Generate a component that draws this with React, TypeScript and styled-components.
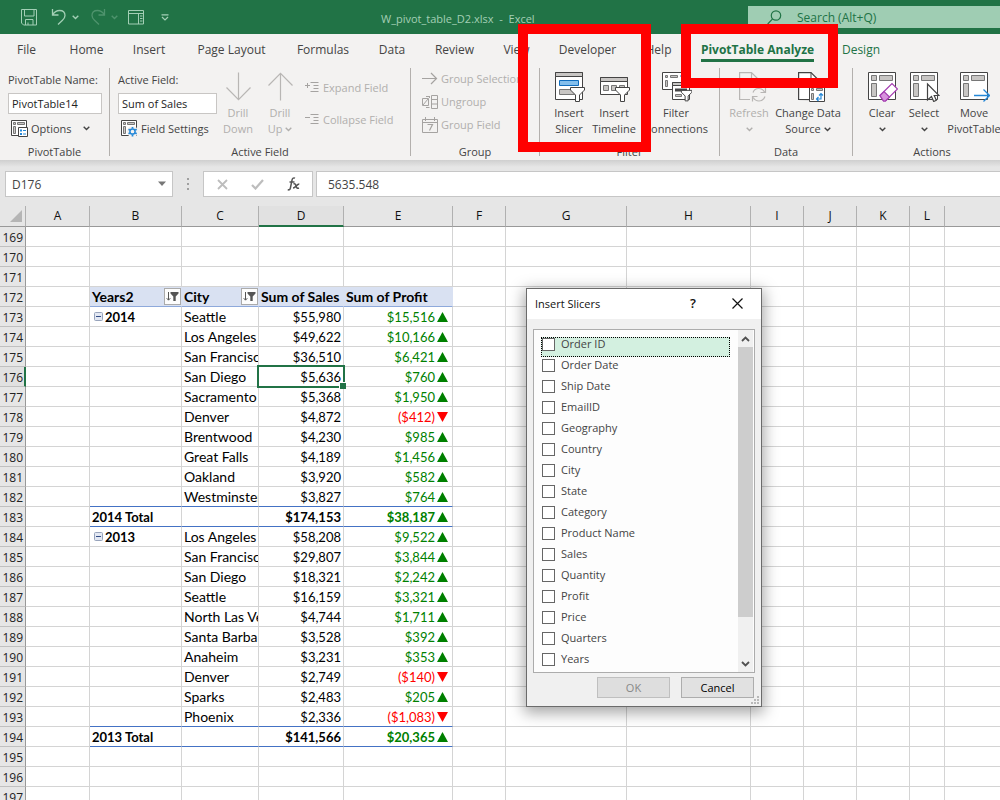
import React from 'react';
import styled, { createGlobalStyle, css } from 'styled-components';

const ui = `"Open Sans", "Noto Sans", sans-serif`;
const sheet = `Lato, "Liberation Sans", sans-serif`;

const Global = createGlobalStyle`
  * { box-sizing: border-box; }
  body { margin: 0; background: #fff; font-family: ${ui}; font-size: 12px; color: #444; }
  button, input { font: inherit; color: inherit; margin: 0; }
  button { border: 0; padding: 0; background: none; }
  svg { display: block; flex: none; }
`;

const Window = styled.div`
  position: relative;
  display: flex;
  flex-direction: column;
  height: 100vh;
  overflow: hidden;
`;

/* ---------- title bar ---------- */
const TitleBar = styled.header`
  display: flex;
  flex: none;
  align-items: center;
  height: 34px;
  background: #217346;
  color: #a3cfb5;
  overflow: hidden;
`;
const QuickAccess = styled.div`
  display: flex;
  flex: none;
  align-items: center;
  width: 381px;
  padding-left: 21px;
`;
const QuickButton = styled.button<{ $gap: number; $dim?: boolean }>`
  margin-right: ${(p) => p.$gap}px;
  opacity: ${(p) => (p.$dim ? 0.35 : 1)};
`;
const FileName = styled.div`
  flex: 1;
  padding-top: 2px;
  white-space: pre;
  font-size: 11px;
`;
const SearchBox = styled.label`
  display: flex;
  flex: none;
  align-items: center;
  gap: 15px;
  width: 252px;
  height: 22px;
  padding-left: 19px;
  background: #9fcdb3;
  color: #217346;
`;
const SearchInput = styled.input`
  width: 180px;
  padding: 0;
  border: 0;
  outline: 0;
  background: none;
  font-size: 12px;
  &::placeholder { color: #217346; opacity: 1; }
`;

/* ---------- tabs ---------- */
const Tabs = styled.nav`
  display: flex;
  flex: none;
  height: 30px;
  background: #f3f2f1;
  overflow: hidden;
`;
const Tab = styled.button<{ $w: number; $tone?: 'active' | 'green' }>`
  flex: none;
  display: flex;
  justify-content: center;
  width: ${(p) => p.$w}px;
  padding-top: 6px;
  font-size: 12px;
  line-height: 19px;
  white-space: nowrap;
  color: ${(p) => (p.$tone ? '#217346' : '#444')};
  ${(p) => p.$tone === 'active' && css`
    font-weight: 700;
    span { border-bottom: 3px solid #217346; height: 22px; }
  `}
`;

/* ---------- ribbon ---------- */
const Ribbon = styled.section`
  display: flex;
  flex: none;
  height: 96px;
  background: #f3f2f1;
  overflow: hidden;
`;
const Group = styled.div<{ $w?: number }>`
  display: flex;
  flex-direction: column;
  flex: ${(p) => (p.$w ? 'none' : '1 0 158px')};
  width: ${(p) => (p.$w ? `${p.$w}px` : 'auto')};
  margin: 4px 0;
  ${(p) => p.$w && 'border-right: 1px solid #b3b0ad;'}
`;
const GroupBody = styled.div<{ $pad: number }>`
  display: flex;
  flex: none;
  height: 76px;
  padding-left: ${(p) => p.$pad}px;
`;
const Caption = styled.div<{ $w?: number }>`
  flex: none;
  width: ${(p) => (p.$w ? `${p.$w}px` : '100%')};
  text-align: center;
  font-size: 11px;
  line-height: 16px;
`;
const Stack = styled.div<{ $w: number }>`
  display: flex;
  flex: none;
  flex-direction: column;
  width: ${(p) => p.$w}px;
`;
const FieldLabel = styled.label`
  flex: none;
  height: 25px;
  padding-top: 4px;
  font-size: 11px;
  line-height: 16px;
  white-space: nowrap;
`;
const FieldInput = styled.input`
  flex: none;
  height: 21px;
  width: 100%;
  padding: 0 3px;
  border: 1px solid #c8c6c4;
  background: #fff;
  color: #222;
  font-size: 11px;
`;
const SmallButton = styled.button<{ $off?: boolean; $h?: number; $lift?: number; $pad?: number }>`
  display: flex;
  flex: none;
  align-items: center;
  gap: 3px;
  height: ${(p) => p.$h ?? 23}px;
  padding: 0 0 ${(p) => p.$lift ?? 0}px ${(p) => p.$pad ?? 0}px;
  font-size: 11px;
  white-space: nowrap;
  color: ${(p) => (p.$off ? '#b1afad' : '#444')};
`;
const MenuLabel = styled.span`
  margin-right: 8px;
`;
const BigButton = styled.button<{ $w: number; $off?: boolean }>`
  display: flex;
  flex: none;
  flex-direction: column;
  align-items: center;
  width: ${(p) => p.$w}px;
  padding-top: 4px;
  font-size: 11px;
  line-height: 16px;
  white-space: nowrap;
  color: ${(p) => (p.$off ? '#b1afad' : '#444')};
`;
const Line = styled.span`
  display: flex;
  align-items: center;
  gap: 3px;
  height: 16px;
`;
const IconSlot = styled.span`
  display: flex;
  justify-content: center;
  height: 33px;
  padding-left: 2px;
`;
const Rows = styled.div<{ $top: number; $pad: number }>`
  display: flex;
  flex-direction: column;
  padding: ${(p) => p.$top}px 0 0 ${(p) => p.$pad}px;
`;

/* ---------- formula bar ---------- */
const FormulaRow = styled.section`
  display: flex;
  flex: none;
  height: 46px;
  padding: 11px 0 9px 5px;
  background: linear-gradient(#cfcfcf, #e6e6e6 7px);
`;
const WhiteBox = styled.div<{ $w: number }>`
  display: flex;
  align-items: center;
  flex: none;
  width: ${(p) => p.$w}px;
  background: #fff;
  border: 1px solid #c6c6c6;
`;
const NameInput = styled.input`
  flex: 1;
  min-width: 0;
  padding: 0 6px;
  border: 0;
  background: none;
  font-size: 12px;
`;
const Grip = styled.div`
  display: flex;
  align-items: center;
  justify-content: center;
  width: 30px;
`;
const FormulaTools = styled(WhiteBox)`
  justify-content: space-around;
  padding: 0 1px 0 2px;
`;
const FormulaInput = styled.input`
  flex: 1;
  min-width: 0;
  margin-left: 3px;
  padding: 0 11px;
  border: 1px solid #c6c6c6;
  border-right: 0;
  background: #fff;
  font-size: 12px;
`;

/* ---------- sheet ---------- */
const SheetArea = styled.main`
  flex: 1;
  min-height: 0;
  overflow: hidden;
  background: #fff;
`;
const Table = styled.table`
  width: 100%;
  min-width: 1066px;
  table-layout: fixed;
  border-collapse: separate;
  border-spacing: 0;
  font-family: ${sheet};
  font-size: 13px;
  color: #000;
`;
const ColHead = styled.th<{ $sel?: boolean }>`
  height: 21px;
  padding: ${(p) => (p.$sel ? '1px 0 0' : '1px 0')};
  background: ${(p) => (p.$sel ? '#e1e1e1' : '#e6e6e6')};
  border-right: 1px solid #b0b0b0;
  border-bottom: ${(p) => (p.$sel ? '2px solid #217346' : '1px solid #999')};
  font: 12px/18px ${ui};
  color: #111;
`;
const Corner = styled(ColHead)`
  svg { margin-left: auto; margin-right: 3px; }
`;
const RowHead = styled.th<{ $sel?: boolean }>`
  height: 20px;
  padding: 2px ${(p) => (p.$sel ? 1 : 2)}px 0 0;
  text-align: right;
  background: ${(p) => (p.$sel ? '#e1e1e1' : '#e6e6e6')};
  border-right: ${(p) => (p.$sel ? '2px solid #217346' : '1px solid #999')};
  border-bottom: 1px solid #c0c0c0;
  font: 12px/17px ${ui};
  color: #222;
`;
type CellProps = { $bold?: boolean; $right?: boolean; $line?: string; $head?: boolean; $label?: boolean; $tone?: string; $sel?: boolean };
const Cell = styled.td<CellProps>`
  position: relative;
  height: 20px;
  padding: ${(p) => (p.$label ? 1 : 2)}px 2px 0;
  vertical-align: top;
  font-size: ${(p) => (p.$label ? 14 : 13)}px;
  line-height: 17px;
  white-space: nowrap;
  overflow: ${(p) => (p.$sel ? 'visible' : 'hidden')};
  border-right: 1px solid ${(p) => (p.$head ? '#d9e1f2' : '#d4d4d4')};
  border-bottom: 1px solid ${(p) => p.$line ?? '#d4d4d4'};
  background: ${(p) => (p.$head ? '#d9e1f2' : '#fff')};
  font-weight: ${(p) => (p.$bold ? 700 : 400)};
  text-align: ${(p) => (p.$right ? 'right' : 'left')};
  color: ${(p) => p.$tone ?? '#000'};
`;
const Inline = styled.div<{ $end?: boolean; $between?: boolean }>`
  display: flex;
  align-items: center;
  gap: 2px;
  height: 17px;
  justify-content: ${(p) => (p.$end ? 'flex-end' : p.$between ? 'space-between' : 'flex-start')};
`;
const ProfitInline = styled(Inline)`
  padding-right: 2px;
`;
const FilterButton = styled.button`
  display: flex;
  align-items: center;
  justify-content: center;
  width: 17px;
  height: 17px;
  margin-right: -2px;
  border: 1px solid #ababab;
  background: #fdfdfd;
`;
const Collapse = styled.button`
  margin: 0 0 2px 2px;
`;
const SelectionFrame = styled.span`
  position: absolute;
  z-index: 1;
  inset: -2px;
  border: 2px solid #217346;
  pointer-events: none;
  &::after {
    content: '';
    position: absolute;
    right: -3px;
    bottom: -3px;
    width: 6px;
    height: 6px;
    background: #217346;
    border: solid #fff;
    border-width: 1px 0 0 1px;
  }
`;

/* ---------- dialog ---------- */
const Dialog = styled.section`
  position: absolute;
  z-index: 5;
  left: 526px;
  top: 288px;
  width: 236px;
  border: 1px solid #6b6b6b;
  background: #f0f0f0;
  box-shadow: 0 4px 14px 2px rgba(0, 0, 0, 0.35);
  font-size: 11px;
`;
const DialogTitle = styled.div`
  display: flex;
  align-items: center;
  height: 30px;
  padding: 0 18px 2px 8px;
  background: #fff;
  color: #111;
`;
const DialogName = styled.h2`
  flex: 1;
  margin: 0;
  font-size: 11px;
  font-weight: 400;
`;
const HelpButton = styled.button`
  margin-right: 36px;
  font-size: 13px;
  font-weight: 600;
`;
const ListBox = styled.div`
  display: flex;
  margin: 10px 6px 0;
  height: 344px;
  border: 1px solid #acacac;
  background: #fdfdfd;
`;
const Items = styled.div`
  flex: 1;
  padding: 7px 0 0 7px;
`;
const Item = styled.label<{ $on?: boolean }>`
  display: flex;
  align-items: flex-start;
  gap: 6px;
  width: 189px;
  height: 20px;
  margin-bottom: 1px;
  padding: 0 0 0 1px;
  line-height: 14px;
  background: ${(p) => (p.$on ? '#d3f0e0' : 'none')};
  outline: ${(p) => (p.$on ? '1px dotted #000' : '0')};
  outline-offset: -1px;
`;
const Tick = styled.input`
  appearance: none;
  width: 13px;
  height: 13px;
  margin: 1px 0 0;
  border: 1px solid #666;
  background: #fff;
`;
const Scroll = styled.div`
  display: flex;
  flex-direction: column;
  width: 15px;
  margin-right: 1px;
  background: #f0f0f0;
`;
const ScrollButton = styled.button`
  display: flex;
  align-items: center;
  justify-content: center;
  height: 17px;
`;
const Thumb = styled.div`
  height: 270px;
  margin-bottom: auto;
  background: #cdcdcd;
`;
const Actions = styled.div`
  display: flex;
  justify-content: flex-end;
  gap: 11px;
  padding: 4px 7px 8px;
`;
const PushButton = styled.button<{ $off?: boolean }>`
  width: 73px;
  height: 21px;
  border: 1px solid ${(p) => (p.$off ? '#bfbfbf' : '#adadad')};
  background: ${(p) => (p.$off ? '#dedede' : '#e1e1e1')};
  color: ${(p) => (p.$off ? '#888' : '#000')};
`;
const ResizeGrip = styled.svg`
  position: absolute;
  right: 2px;
  bottom: 2px;
`;

const Highlight = styled.div<{ $x: number; $w: number; $h: number }>`
  position: absolute;
  z-index: 6;
  left: ${(p) => p.$x}px;
  top: 24px;
  width: ${(p) => p.$w}px;
  height: ${(p) => p.$h}px;
  border: 10px solid #f00;
  pointer-events: none;
`;

/* ---------- icons ---------- */
const Chevron = ({ c = '#444', s = 7 }: { c?: string; s?: number }) => (
  <svg width={s} height="5" viewBox="0 0 7 5" fill="none" stroke={c} strokeWidth="1.4"><path d="M.7 .8 3.5 3.6 6.3 .8" /></svg>
);
const SaveIcon = () => (
  <svg width="17" height="17" viewBox="0 0 17 17" fill="none" stroke="currentColor">
    <path d="M.5 .5h15v15.500H2.500L.5 14z M3.500 .5v6.500h9.500V.5 M4.500 16v-5.500h7.500V16 M7 16v-2.500" />
  </svg>
);
const UndoIcon = ({ flip }: { flip?: boolean }) => (
  <svg width="16" height="18" viewBox="0 0 16 18" fill="none" stroke="currentColor" strokeWidth="1.300">
    <path transform={flip ? 'matrix(-1 0 0 1 16 0)' : undefined} d="M1.500 1v6h6 M1.500 7C3 4.500 5.500 2.500 8.500 2.500c3.500 0 5.500 2.200 5.500 5 0 2-1 3.300-2.500 4.700L7 16.500" />
  </svg>
);
const PaneIcon = () => (
  <svg width="16" height="15" viewBox="0 0 16 15" fill="none" stroke="currentColor">
    <path d="M.5 .5h15v13.500H.5z M.5 3.500h15 M10.500 3.500V14 M12 6h2.500 M12 8.500h2.500 M12 11h2.500" />
  </svg>
);
const MoreIcon = () => (
  <svg width="8" height="7" viewBox="0 0 8 7" fill="none" stroke="currentColor" strokeWidth="1.200"><path d="M.5 .8h7 M1 3l3 3 3-3" /></svg>
);
const SearchIcon = () => (
  <svg width="15" height="15" viewBox="0 0 15 15" fill="none" stroke="#217346" strokeWidth="1.200"><circle cx="9" cy="5.500" r="4.700" /><path d="M5.600 8.900.7 14" /></svg>
);
const pivotFrame = (
  <>
    <path d="M.5 .5h27v27H.5z" fill="#fff" stroke="#444" />
    <path d="M3.500 3.500h5v5h-5z M11.500 3.500h13v5h-13z M3.500 11.500h5v13h-5z" fill="#c8c6c4" stroke="#777" />
  </>
);
const PivotSmall = ({ gear }: { gear?: boolean }) => (
  <svg width="17" height="17" viewBox="0 0 17 17" fill="none">
    <path d="M.5 .5h15v15H.5z" fill="#fff" stroke="#444" />
    <path d="M2.500 2.500h2v2h-2z M6.500 2.500h7v2h-7z M2.500 6.500h2v7h-2z" fill="#c8c6c4" stroke="#777" />
    {gear ? (
      <>
        <circle cx="11.500" cy="11.500" r="5.500" fill="#f3f2f1" />
        <circle cx="11.500" cy="11.500" r="2.600" stroke="#2488d8" strokeWidth="1.500" />
        <path d="M11.500 7v1.500 M11.500 14.500V16.500 M7.500 9.300l1.400 .8 M14.200 13l1.500 .8 M7.500 13.700l1.400-.8 M14.200 10l1.500-.8" stroke="#2488d8" strokeWidth="1.700" />
      </>
    ) : (
      <>
        <path d="M7.500 7.500h9v9h-9z" fill="#fff" stroke="#444" />
        <path d="M9 9.500h2v2H9z M9 13h2v2H9z" fill="#2488d8" />
        <path d="M12 10.500h3 M12 14h3" stroke="#2488d8" />
      </>
    )}
  </svg>
);
const Arrow = ({ up }: { up?: boolean }) => (
  <svg width="26" height="29" viewBox="1 0 26 29" fill="none" stroke="#b8b6b4" strokeWidth="1.200">
    <path transform={up ? 'matrix(1 0 0 -1 0 29)' : undefined} d="M13.500 .5v27 M1.500 15.500 13.500 27.700 25.500 15.500" />
  </svg>
);
const OutlineIcon = ({ plus }: { plus?: boolean }) => (
  <svg width="15" height="12" viewBox="0 0 15 12" fill="none" stroke="#a5a3a1">
    <path d="M5.500 1.500h8 M8.500 4.500h5 M8.500 7.500h5 M5.500 10.500h8 M0 4.500h5" />
    {plus && <path d="M2.500 2v5" />}
  </svg>
);
const GroupArrow = () => (
  <svg width="16" height="13" viewBox="0 0 16 13" fill="none" stroke="#a5a3a1" strokeWidth="1.200"><path d="M0 6.500h14.500 M9 1l5.500 5.500L9 12" /></svg>
);
const UngroupIcon = () => (
  <svg width="16" height="14" viewBox="0 0 16 14" fill="none" stroke="#a5a3a1">
    <path d="M.5 3.500h6v7h-6z M1 10l5-6 M9.500 .5h6v13h-6z M9.500 4.500h6 M9.500 9h6 M4 1.500h3.500 M7.500 1v2 M4 12.500h3.500" />
  </svg>
);
const CalendarIcon = () => (
  <svg width="16" height="16" viewBox="0 0 16 16" fill="none" stroke="#a5a3a1">
    <path d="M.5 2.500h15v13H.5z M.5 5.500h15 M3.500 0v4 M12.500 0v4" /><path d="M5.500 7.500h5L7.500 13.500" strokeWidth="1.200" />
  </svg>
);
const funnel = 'M.5 .5h14v2.500L9.500 8v6.500h-4V8L.5 3z';
const SlicerIcon = () => (
  <svg width="30" height="30" viewBox="0 0 30 30">
    <path d="M.5 .5h27v27H.5z" fill="#fff" stroke="#444" />
    <path d="M.5 .5h27v4H.5z" fill="#c8c6c4" stroke="#444" />
    <path d="M4.500 8.500h19v5h-19z" fill="#83beec" stroke="#0f6cbd" />
    <path d="M4.500 17.500h15v5h-15z" fill="#c8c6c4" stroke="#777" />
    <path transform="translate(15 15)" d={funnel} fill="#fff" stroke="#444" />
  </svg>
);
const TimelineIcon = () => (
  <svg width="30" height="30" viewBox="0 0 30 30">
    <path d="M.5 5.500h27v17H.5z" fill="#fff" stroke="#444" />
    <path d="M.5 5.500h27v4H.5z" fill="#c8c6c4" stroke="#444" />
    <path d="M3.500 13.500h5v5h-5z M11.500 13.500h5v5h-5z M19.500 13.500h5v5h-5z" fill="#c8c6c4" stroke="#777" />
    <path transform="translate(15 15)" d={funnel} fill="#fff" stroke="#444" />
  </svg>
);
const ConnectionsIcon = () => (
  <svg width="30" height="30" viewBox="0 0 30 30">
    <path d="M.5 .5h20v17H.5z" fill="#fff" stroke="#444" />
    <path d="M3.500 3.500h2v2h-2z M8.500 3.500h7v2h-7z M3.500 8.500h2v6h-2z" fill="#c8c6c4" stroke="#777" />
    <path d="M18 4h7v6" fill="none" stroke="#2488d8" />
    <path d="M10.500 10.500h17v17h-17z" fill="#fff" stroke="#444" />
    <path d="M10.500 10.500h17v3h-17z" fill="#c8c6c4" stroke="#444" />
    <path d="M13 16.500h12v3H13z" fill="#444" />
    <path d="M13.500 22.500h6v2h-6z" fill="#c8c6c4" stroke="#777" />
    <path transform="translate(19 18) scale(.75)" d={funnel} fill="#fff" stroke="#444" strokeWidth="1.300" />
  </svg>
);
const RefreshIcon = () => (
  <svg width="34" height="30" viewBox="-6 0 34 30" fill="none" stroke="#b8b6b4" strokeWidth="1.200">
    <path d="M11 27.500H.6V.6H12.500l6 6V14 M12.500 .6v6h6" />
    <path d="M14 20.500c1-2.800 3.300-4 5.700-4 2.800 0 4.500 1.300 5.800 3.500 M26.500 15.500v5h-5 M26 24.500c-1 2.800-3.300 4.500-6 4.500-2.500 0-4.500-1.300-5.700-3.500 M13.500 29.500v-5h5" />
  </svg>
);
const ChangeSourceIcon = () => (
  <svg width="34" height="30" viewBox="-6 0 34 30" fill="none">
    <path d="M.6 27.500V.6H13l6 6v21z" fill="#fff" stroke="#444" strokeWidth="1.200" /><path d="M13 .6v6h6" stroke="#444" />
    <path d="M11.500 14.500h15v15h-15z" fill="#fff" stroke="#444" />
    <path d="M13.500 16.500h2v2h-2z M18.500 16.500h6v2h-6z M13.500 21.500h2v6h-2z" fill="#c8c6c4" stroke="#777" />
    <path d="M18.500 27h4.500v-5.500 M20.500 25l-2 2 2 2 M21 23.500l2-2 2 2" stroke="#2488d8" strokeWidth="1.200" />
  </svg>
);
const ClearIcon = () => (
  <svg width="30" height="30" viewBox="0 0 30 30">
    {pivotFrame}
    <path d="M12 23.500 24 11.500l5.500 5.500L17.500 29h-2z" fill="#fff" stroke="#a33bb0" strokeWidth="1.200" />
    <path d="M12 23.500 16 19.500l5.500 5.500-4 4h-2z" fill="#d792dd" stroke="#a33bb0" strokeWidth="1.200" />
  </svg>
);
const SelectIcon = () => (
  <svg width="30" height="30" viewBox="0 0 30 30">
    {pivotFrame}
    <path d="M17.500 12v16l4-3.500 2.200 5 2.600-1.200-2.100-4.800h4.800z" fill="#fff" stroke="#444" strokeWidth="1.200" />
  </svg>
);
const MoveIcon = () => (
  <svg width="30" height="30" viewBox="0 0 30 30">
    {pivotFrame}
    <path d="M14 23.500h15 M23.500 17.500l6 6-6 6" fill="none" stroke="#2488d8" strokeWidth="1.300" />
  </svg>
);
const SortFilterIcon = () => (
  <svg width="13" height="11" viewBox="0 0 13 11">
    <path d="M2.500 1v8 M.7 7.200l1.800 2 1.800-2" fill="none" stroke="#555" />
    <path d="M4.500 1h8v1.500L9.700 5.500V10H7.300V5.500L4.500 2.500z" fill="#555" />
  </svg>
);
const MinusBox = () => (
  <svg width="9" height="9" viewBox="0 0 9 9"><rect x=".5" y=".5" width="8" height="8" rx="1" fill="#e3e8f3" stroke="#97a3bb" /><path d="M2 4.500h5" stroke="#334c86" /></svg>
);
const Trend = ({ down }: { down?: boolean }) => (
  <svg width="11" height="11" viewBox="0 0 11 11"><path d={down ? 'M0 0h11L5.500 10z' : 'M0 10h11L5.500 0z'} fill={down ? '#f00' : '#008000'} /></svg>
);

/* ---------- data ---------- */
const tabs: [string, number, ('active' | 'green')?][] = [
  ['File', 53], ['Home', 67], ['Insert', 58], ['Page Layout', 107], ['Formulas', 76], ['Data', 62],
  ['Review', 63], ['View', 61], ['Developer', 81], ['Help', 61], ['PivotTable Analyze', 137, 'active'], ['Design', 70, 'green'],
];
const columns: [string, number?][] = [
  ['A', 64], ['B', 92], ['C', 77], ['D', 85], ['E', 109], ['F', 53], ['G', 121], ['H', 124],
  ['I', 53], ['J', 53], ['K', 53], ['L', 35], ['M'],
];
type Row = { year?: string; total?: string; city?: string; sales: string; profit: string };
const data: Record<number, Row> = {
  173: { year: '2014', city: 'Seattle', sales: '$55,980', profit: '$15,516' },
  174: { city: 'Los Angeles', sales: '$49,622', profit: '$10,166' },
  175: { city: 'San Francisco', sales: '$36,510', profit: '$6,421' },
  176: { city: 'San Diego', sales: '$5,636', profit: '$760' },
  177: { city: 'Sacramento', sales: '$5,368', profit: '$1,950' },
  178: { city: 'Denver', sales: '$4,872', profit: '($412)' },
  179: { city: 'Brentwood', sales: '$4,230', profit: '$985' },
  180: { city: 'Great Falls', sales: '$4,189', profit: '$1,456' },
  181: { city: 'Oakland', sales: '$3,920', profit: '$582' },
  182: { city: 'Westminster', sales: '$3,827', profit: '$764' },
  183: { total: '2014 Total', sales: '$174,153', profit: '$38,187' },
  184: { year: '2013', city: 'Los Angeles', sales: '$58,208', profit: '$9,522' },
  185: { city: 'San Francisco', sales: '$29,807', profit: '$3,844' },
  186: { city: 'San Diego', sales: '$18,321', profit: '$2,242' },
  187: { city: 'Seattle', sales: '$16,159', profit: '$3,321' },
  188: { city: 'North Las Vegas', sales: '$4,744', profit: '$1,711' },
  189: { city: 'Santa Barbara', sales: '$3,528', profit: '$392' },
  190: { city: 'Anaheim', sales: '$3,231', profit: '$353' },
  191: { city: 'Denver', sales: '$2,749', profit: '($140)' },
  192: { city: 'Sparks', sales: '$2,483', profit: '$205' },
  193: { city: 'Phoenix', sales: '$2,336', profit: '($1,083)' },
  194: { total: '2013 Total', sales: '$141,566', profit: '$20,365' },
};
const slicers = ['Order ID', 'Order Date', 'Ship Date', 'EmailID', 'Geography', 'Country', 'City', 'State', 'Category',
  'Product Name', 'Sales', 'Quantity', 'Profit', 'Price', 'Quarters', 'Years'];
const rowNumbers = Array.from({ length: 29 }, (_, i) => 169 + i);
const blueLine = (n: number) => ([182, 183, 193, 194].includes(n) ? '#4472c4' : undefined);

const PivotCells = ({ n }: { n: number }) => {
  if (n === 172) {
    const head = { $head: true, $bold: true, $label: true, $line: '#8ea9db' };
    return (
      <>
        <Cell {...head}><Inline $between>Years2<FilterButton aria-label="Filter years"><SortFilterIcon /></FilterButton></Inline></Cell>
        <Cell {...head}><Inline $between>City<FilterButton aria-label="Filter cities"><SortFilterIcon /></FilterButton></Inline></Cell>
        <Cell {...head}>Sum of Sales</Cell>
        <Cell {...head}>Sum of Profit</Cell>
      </>
    );
  }
  const r = data[n];
  if (!r) return <><Cell /><Cell /><Cell /><Cell /></>;
  const down = r.profit.startsWith('(');
  const line = blueLine(n);
  const bold = !!r.total;
  return (
    <>
      <Cell $bold $line={line}>
        {r.year ? <Inline><Collapse aria-label={`Collapse ${r.year}`}><MinusBox /></Collapse>{r.year}</Inline> : r.total}
      </Cell>
      <Cell $label $line={line}>{r.city}</Cell>
      <Cell $right $bold={bold} $line={line} $sel={n === 176}>{r.sales}{n === 176 && <SelectionFrame />}</Cell>
      <Cell $bold={bold} $line={line} $tone={down ? '#f00' : '#008000'}>
        <ProfitInline $end>{r.profit}<Trend down={down} /></ProfitInline>
      </Cell>
    </>
  );
};

export default function App() {
  return (
    <Window>
      <Global />
      <TitleBar>
        <QuickAccess>
          <QuickButton $gap={13} aria-label="Save"><SaveIcon /></QuickButton>
          <QuickButton $gap={5} aria-label="Undo"><UndoIcon /></QuickButton>
          <QuickButton $gap={11} aria-label="Undo history"><Chevron c="currentColor" /></QuickButton>
          <QuickButton $gap={5} $dim aria-label="Redo"><UndoIcon flip /></QuickButton>
          <QuickButton $gap={10} $dim aria-label="Redo history"><Chevron c="currentColor" /></QuickButton>
          <QuickButton $gap={17} aria-label="Task pane"><PaneIcon /></QuickButton>
          <QuickButton $gap={0} aria-label="Customize toolbar"><MoreIcon /></QuickButton>
        </QuickAccess>
        <FileName>{'W_pivot_table_D2.xlsx  -  Excel'}</FileName>
        <SearchBox><SearchIcon /><SearchInput aria-label="Search" placeholder="Search (Alt+Q)" /></SearchBox>
      </TitleBar>

      <Tabs>
        {tabs.map(([name, w, tone]) => <Tab key={name} $w={w} $tone={tone}><span>{name}</span></Tab>)}
      </Tabs>

      <Ribbon>
        <Group $w={110}>
          <GroupBody $pad={8}>
            <Stack $w={94}>
              <FieldLabel htmlFor="pt-name">PivotTable Name:</FieldLabel>
              <FieldInput id="pt-name" defaultValue="PivotTable14" />
              <SmallButton $h={28} $pad={3}><PivotSmall /><MenuLabel>Options</MenuLabel><Chevron /></SmallButton>
            </Stack>
          </GroupBody>
          <Caption>PivotTable</Caption>
        </Group>
        <Group $w={301}>
          <GroupBody $pad={8}>
            <Stack $w={99}>
              <FieldLabel htmlFor="active-field">Active Field:</FieldLabel>
              <FieldInput id="active-field" defaultValue="Sum of Sales" />
              <SmallButton $h={28} $pad={3}><PivotSmall gear />Field Settings</SmallButton>
            </Stack>
            <BigButton $w={42} $off><IconSlot><Arrow /></IconSlot><Line>Drill</Line><Line>Down</Line></BigButton>
            <BigButton $w={42} $off><IconSlot><Arrow up /></IconSlot><Line>Drill</Line><Line>Up<Chevron c="#b1afad" /></Line></BigButton>
            <Rows $top={3} $pad={4}>
              <SmallButton $off $h={32}><OutlineIcon plus />Expand Field</SmallButton>
              <SmallButton $off $h={32}><OutlineIcon />Collapse Field</SmallButton>
            </Rows>
          </GroupBody>
          <Caption>Active Field</Caption>
        </Group>
        <Group $w={129}>
          <GroupBody $pad={10}>
            <Rows $top={0} $pad={1}>
              <SmallButton $off $lift={2}><GroupArrow />Group Selection</SmallButton>
              <SmallButton $off $lift={2}><UngroupIcon />Ungroup</SmallButton>
              <SmallButton $off $lift={2}><CalendarIcon />Group Field</SmallButton>
            </Rows>
          </GroupBody>
          <Caption>Group</Caption>
        </Group>
        <Group $w={180}>
          <GroupBody $pad={9}>
            <BigButton $w={40}><IconSlot><SlicerIcon /></IconSlot><Line>Insert</Line><Line>Slicer</Line></BigButton>
            <BigButton $w={50}><IconSlot><TimelineIcon /></IconSlot><Line>Insert</Line><Line>Timeline</Line></BigButton>
            <BigButton $w={74}><IconSlot><ConnectionsIcon /></IconSlot><Line>Filter</Line><Line>Connections</Line></BigButton>
          </GroupBody>
          <Caption>Filter</Caption>
        </Group>
        <Group $w={133}>
          <GroupBody $pad={8}>
            <BigButton $w={42} $off><IconSlot><RefreshIcon /></IconSlot><Line>Refresh</Line><Line><Chevron c="#b1afad" /></Line></BigButton>
            <BigButton $w={76}><IconSlot><ChangeSourceIcon /></IconSlot><Line>Change Data</Line><Line>Source<Chevron /></Line></BigButton>
          </GroupBody>
          <Caption>Data</Caption>
        </Group>
        <Group>
          <GroupBody $pad={8}>
            <BigButton $w={42}><IconSlot><ClearIcon /></IconSlot><Line>Clear</Line><Line><Chevron /></Line></BigButton>
            <BigButton $w={42}><IconSlot><SelectIcon /></IconSlot><Line>Select</Line><Line><Chevron /></Line></BigButton>
            <BigButton $w={58}><IconSlot><MoveIcon /></IconSlot><Line>Move</Line><Line>PivotTable</Line></BigButton>
          </GroupBody>
          <Caption $w={158}>Actions</Caption>
        </Group>
      </Ribbon>

      <FormulaRow>
        <WhiteBox $w={168}>
          <NameInput aria-label="Name box" defaultValue="D176" />
          <svg width="18" height="6" viewBox="0 0 18 6"><path d="M4 0.500h8L8 5z" fill="#777" /></svg>
        </WhiteBox>
        <Grip><svg width="2" height="12" viewBox="0 0 2 12"><path d="M0 0h2v2H0z M0 5h2v2H0z M0 10h2v2H0z" fill="#a0a0a0" /></svg></Grip>
        <FormulaTools $w={110}>
          <button aria-label="Cancel entry"><svg width="11" height="11" viewBox="0 0 11 11" stroke="#bdbdbd" strokeWidth="1.800"><path d="M1 1l9 9 M10 1l-9 9" /></svg></button>
          <button aria-label="Accept entry"><svg width="13" height="11" viewBox="0 0 13 11" fill="none" stroke="#bdbdbd" strokeWidth="2.200"><path d="M1 6l3.500 3.500L12 1" /></svg></button>
          <button aria-label="Insert function">
            <svg width="13" height="14" viewBox="0 0 13 14" fill="none" stroke="#555" strokeWidth="1.500">
              <path d="M8 1.200C6.200.3 5.300 1.600 5 3.200L3.400 11c-.3 1.600-1.200 2.300-2.700 1.600 M2.500 5h5 M6.500 7c1.500-.8 2 .3 2.500 2s1 2.700 3 2 M12.300 6.900C10 6.800 8.500 11 6 11" />
            </svg>
          </button>
        </FormulaTools>
        <FormulaInput aria-label="Formula bar" defaultValue="5635.548" />
      </FormulaRow>

      <SheetArea>
        <Table>
          <colgroup>
            <col width="26" />
            {columns.map(([c, w]) => <col key={c} width={w} />)}
          </colgroup>
          <thead>
            <tr>
              <Corner aria-label="Select all"><svg width="12" height="12" viewBox="0 0 12 12"><path d="M12 0v12H0z" fill="#b5b5b5" /></svg></Corner>
              {columns.map(([c]) => <ColHead key={c} scope="col" $sel={c === 'D'}>{c}</ColHead>)}
            </tr>
          </thead>
          <tbody>
            {rowNumbers.map((n) => (
              <tr key={n}>
                <RowHead scope="row" $sel={n === 176}>{n}</RowHead>
                <Cell />
                <PivotCells n={n} />
                {columns.slice(5).map(([c]) => <Cell key={c} />)}
              </tr>
            ))}
          </tbody>
        </Table>
      </SheetArea>

      <Dialog role="dialog" aria-labelledby="dialog-name">
        <DialogTitle>
          <DialogName id="dialog-name">Insert Slicers</DialogName>
          <HelpButton aria-label="Help">?</HelpButton>
          <button aria-label="Close"><svg width="11" height="11" viewBox="0 0 11 11" stroke="#111" strokeWidth="1.200"><path d="M.5 .5l10 10 M10.500 .5l-10 10" /></svg></button>
        </DialogTitle>
        <ListBox>
          <Items>
            {slicers.map((s, i) => <Item key={s} $on={i === 0}><Tick type="checkbox" />{s}</Item>)}
          </Items>
          <Scroll>
            <ScrollButton aria-label="Scroll up"><svg width="9" height="6" viewBox="0 0 9 6" fill="none" stroke="#505050" strokeWidth="1.800"><path d="M1 5l3.500-3.500L8 5" /></svg></ScrollButton>
            <Thumb />
            <ScrollButton aria-label="Scroll down"><svg width="9" height="6" viewBox="0 0 9 6" fill="none" stroke="#505050" strokeWidth="1.800"><path d="M1 1l3.500 3.500L8 1" /></svg></ScrollButton>
          </Scroll>
        </ListBox>
        <Actions>
          <PushButton $off>OK</PushButton>
          <PushButton>Cancel</PushButton>
        </Actions>
        <ResizeGrip width="8" height="8" viewBox="0 0 8 8"><path d="M6 0h2v2H6z M3 3h2v2H3z M6 3h2v2H6z M0 6h2v2H0z M3 6h2v2H3z M6 6h2v2H6z" fill="#b8b8b8" /></ResizeGrip>
      </Dialog>

      <Highlight $x={518} $w={133} $h={128} />
      <Highlight $x={681} $w={157} $h={64} />
    </Window>
  );
}
